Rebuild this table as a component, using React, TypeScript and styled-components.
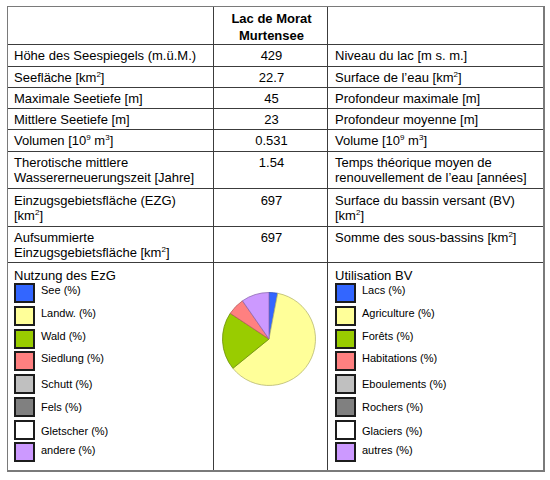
import React from "react";
import styled, { createGlobalStyle } from "styled-components";

const Global = createGlobalStyle`
  html, body { margin: 0; padding: 0; background: #ffffff; }
  body { font-family: "Liberation Sans", Arial, Helvetica, sans-serif; color: #000; }
`;

const Table = styled.div`
  display: grid;
  grid-template-columns: 206px 114px 215px;
  width: 538px;
  box-sizing: border-box;
  margin: 6px 0 0 7px;
  border-top: 1px solid #7a7a7a;
  border-left: 1px solid #7a7a7a;
  border-right: 2px solid #7a7a7a;
  border-bottom: 2px solid #7a7a7a;
  font-size: 13px;
  line-height: 15px;
`;

const Cell = styled.div<{ $h: number; $pt: number; $center?: boolean; $divider?: boolean; $last?: boolean; $pl?: number }>`
  box-sizing: border-box;
  height: ${(p) => p.$h}px;
  padding: ${(p) => p.$pt}px 4px 0 ${(p) => p.$pl ?? 6}px;
  text-align: ${(p) => (p.$center ? "center" : "left")};
  border-right: ${(p) => (p.$divider ? "1px solid #3c3c3c" : "none")};
  border-bottom: ${(p) => (p.$last ? "none" : "1px solid #3c3c3c")};
  white-space: nowrap;
`;

const HeadTitle = styled.div`
  font-weight: bold;
  line-height: 17px;
`;

const Sup = styled.sup`
  font-size: 8px;
  line-height: 0;
  vertical-align: 5px;
`;

const LegendTitle = styled.div`
  height: 14px;
  line-height: 15px;
  margin-bottom: 1px;
`;

const LegendList = styled.div`
  display: grid;
  grid-auto-rows: 22.75px;
`;

const LegendItem = styled.div`
  display: flex;
  align-items: flex-start;
  gap: 6px;
  font-size: 11px;
`;

const Swatch = styled.div<{ $color: string }>`
  box-sizing: border-box;
  width: 21px;
  height: 20px;
  flex: none;
  background: ${(p) => p.$color};
  border: 2px solid #1c1c1c;
`;

const LegendLabel = styled.span<{ $drop: number }>`
  line-height: 15px;
  padding-top: ${(p) => p.$drop}px;
`;

const PieWrap = styled.div`
  display: flex;
  justify-content: center;
  padding-top: 28px;
`;

const km2 = (
  <>
    [km<Sup>2</Sup>]
  </>
);

type Row = { h: number; pt: number; de: React.ReactNode; val: string; fr: React.ReactNode };

const rows: Row[] = [
  { h: 22, pt: 3, de: "Höhe des Seespiegels (m.ü.M.)", val: "429", fr: "Niveau du lac [m s. m.]" },
  { h: 21, pt: 3, de: <>Seefläche {km2}</>, val: "22.7", fr: <>Surface de l’eau {km2}</> },
  { h: 21, pt: 3, de: "Maximale Seetiefe [m]", val: "45", fr: "Profondeur maximale [m]" },
  { h: 21, pt: 3, de: "Mittlere Seetiefe [m]", val: "23", fr: "Profondeur moyenne [m]" },
  {
    h: 22,
    pt: 3,
    de: (
      <>
        Volumen [10<Sup>9</Sup> m<Sup>3</Sup>]
      </>
    ),
    val: "0.531",
    fr: (
      <>
        Volume [10<Sup>9</Sup> m<Sup>3</Sup>]
      </>
    ),
  },
  {
    h: 37,
    pt: 3,
    de: (
      <>
        Therotische mittlere
        <br />
        Wassererneuerungszeit [Jahre]
      </>
    ),
    val: "1.54",
    fr: (
      <>
        Temps théorique moyen de
        <br />
        renouvellement de l’eau [années]
      </>
    ),
  },
  {
    h: 38,
    pt: 4,
    de: (
      <>
        Einzugsgebietsfläche (EZG)
        <br />
        {km2}
      </>
    ),
    val: "697",
    fr: (
      <>
        Surface du bassin versant (BV)
        <br />
        {km2}
      </>
    ),
  },
  {
    h: 36,
    pt: 3,
    de: (
      <>
        Aufsummierte
        <br />
        Einzugsgebietsfläche {km2}
      </>
    ),
    val: "697",
    fr: <>Somme des sous-bassins {km2}</>,
  },
];

type Legend = { color: string; de: string; fr: string; drop: number };

const legend: Legend[] = [
  { color: "#3366ff", de: "See (%)", fr: "Lacs (%)", drop: 0 },
  { color: "#ffff99", de: "Landw. (%)", fr: "Agriculture (%)", drop: 0 },
  { color: "#99cc00", de: "Wald (%)", fr: "Forêts (%)", drop: 0 },
  { color: "#ff8080", de: "Siedlung (%)", fr: "Habitations (%)", drop: 0 },
  { color: "#c0c0c0", de: "Schutt (%)", fr: "Eboulements (%)", drop: 3 },
  { color: "#808080", de: "Fels (%)", fr: "Rochers (%)", drop: 3 },
  { color: "#ffffff", de: "Gletscher (%)", fr: "Glaciers (%)", drop: 4 },
  { color: "#cc99ff", de: "andere (%)", fr: "autres (%)", drop: 1 },
];

type Slice = { from: number; to: number; fill: string; stroke: string };

const slices: Slice[] = [
  { from: 0, to: 10.8, fill: "#3366ff", stroke: "#2a4fc0" },
  { from: 10.8, to: 230.9, fill: "#ffff99", stroke: "#b8b870" },
  { from: 230.9, to: 303.5, fill: "#99cc00", stroke: "#6b8f00" },
  { from: 303.5, to: 325.2, fill: "#ff8080", stroke: "#b85c5c" },
  { from: 325.2, to: 360, fill: "#cc99ff", stroke: "#8f6bb3" },
];

const Pie: React.FC = () => {
  const cx = 48;
  const cy = 48;
  const r = 46.5;
  const pt = (a: number) => {
    const rad = (a * Math.PI) / 180;
    return [cx + r * Math.sin(rad), cy - r * Math.cos(rad)];
  };
  return (
    <svg width="96" height="96" viewBox="0 0 96 96">
      {slices.map((s, i) => {
        const [x1, y1] = pt(s.from);
        const [x2, y2] = pt(s.to);
        const large = s.to - s.from > 180 ? 1 : 0;
        const d = `M${cx},${cy} L${x1.toFixed(2)},${y1.toFixed(2)} A${r},${r} 0 ${large} 1 ${x2.toFixed(2)},${y2.toFixed(2)} Z`;
        return <path key={i} d={d} fill={s.fill} stroke={s.stroke} strokeWidth={0.8} strokeLinejoin="round" />;
      })}
    </svg>
  );
};

const LegendBlock: React.FC<{ title: string; lang: "de" | "fr" }> = ({ title, lang }) => (
  <>
    <LegendTitle>{title}</LegendTitle>
    <LegendList>
      {legend.map((l) => (
        <LegendItem key={l.de}>
          <Swatch $color={l.color} />
          <LegendLabel $drop={l.drop}>{lang === "de" ? l.de : l.fr}</LegendLabel>
        </LegendItem>
      ))}
    </LegendList>
  </>
);

export default function App() {
  return (
    <>
      <Global />
      <Table>
        <Cell $h={38} $pt={3} $divider />
        <Cell $h={38} $pt={3} $center $divider>
          <HeadTitle>
            Lac de Morat
            <br />
            Murtensee
          </HeadTitle>
        </Cell>
        <Cell $h={38} $pt={3} $pl={7} />
        {rows.map((r, i) => (
          <React.Fragment key={i}>
            <Cell $h={r.h} $pt={r.pt} $divider>
              {r.de}
            </Cell>
            <Cell $h={r.h} $pt={r.pt} $center $divider>
              {r.val}
            </Cell>
            <Cell $h={r.h} $pt={r.pt} $pl={7}>
              {r.fr}
            </Cell>
          </React.Fragment>
        ))}
        <Cell $h={207} $pt={5} $divider $last>
          <LegendBlock title="Nutzung des EzG" lang="de" />
        </Cell>
        <Cell $h={207} $pt={0} $pl={0} $divider $last>
          <PieWrap>
            <Pie />
          </PieWrap>
        </Cell>
        <Cell $h={207} $pt={5} $pl={7} $last>
          <LegendBlock title="Utilisation BV" lang="fr" />
        </Cell>
      </Table>
    </>
  );
}
